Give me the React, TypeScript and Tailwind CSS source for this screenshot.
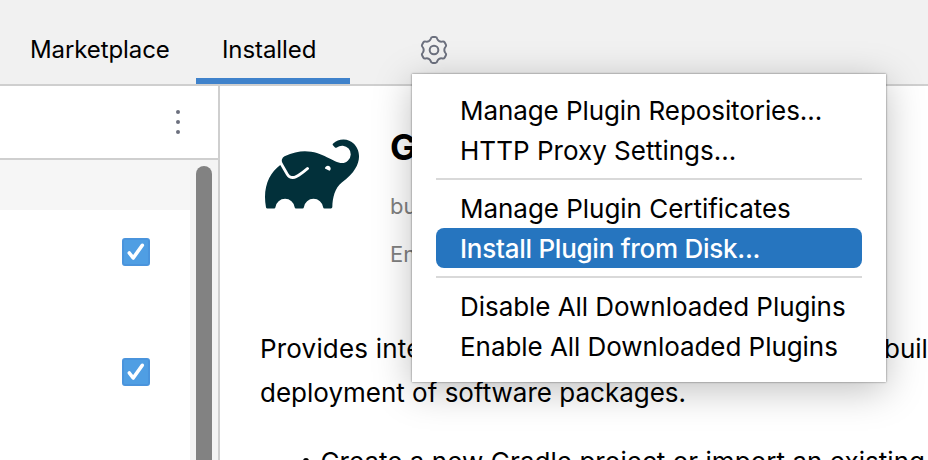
import React from "react";
import { SiGradle } from "react-icons/si";

// One lobe of the gear, pointing up; the outline is this curve turned six times.
const LOBE: [number, number][] = [
  [-12, -28.8], [-11, -30], [-10, -33],
  [-9, -37.5], [-7.5, -39], [-4, -39],
  [-2, -39], [2, -39], [4, -39],
  [7.5, -39], [9, -37.5], [10, -33],
  [11, -30], [12, -28.8], [15.5, -26.8],
];

function gearPath() {
  let d = "M-15.5 -26.8";
  for (let k = 0; k < 6; k++) {
    const c = Math.cos((k * Math.PI) / 3);
    const s = Math.sin((k * Math.PI) / 3);
    LOBE.forEach(([x, y], i) => {
      d += `${i % 3 === 0 ? " C" : " "}${(x * c - y * s).toFixed(2)} ${(x * s + y * c).toFixed(2)}`;
    });
  }
  return d + "Z";
}

function Gear() {
  return (
    <svg className="h-[30px] w-[30px]" viewBox="-45 -45 90 90" fill="none" stroke="#6c707e" strokeWidth="6">
      <path d={gearPath()} />
      <circle r="13" />
    </svg>
  );
}

function Checkbox() {
  return (
    <div className="flex h-7 w-7 items-center justify-center rounded-[3px] border-2 border-[#4a94dc] bg-[#4f9ee3]">
      <svg className="h-6 w-6 shrink-0" viewBox="0 0 24 24" fill="none" stroke="#fff" strokeWidth="3.6" strokeLinecap="round" strokeLinejoin="round">
        <path d="M5.3 13 L9.2 18 L18.3 5.3" />
      </svg>
    </div>
  );
}

function Item({ label, spacing, selected }: { label: string; spacing: string; selected?: boolean }) {
  return (
    <div
      className={`flex h-10 items-center whitespace-nowrap rounded-lg pl-6 pt-0.5 text-[26px] leading-[38px] ${spacing} ${
        selected ? "bg-[#2675bf] font-medium text-white" : "text-black"
      }`}
    >
      {label}
    </div>
  );
}

function Separator() {
  return (
    <div className="flex h-[18px] flex-col justify-center">
      <div className="h-0.5 bg-[#d9d9d9]" />
    </div>
  );
}

export default function App() {
  return (
    <div className="relative flex h-[460px] w-[928px] flex-col overflow-hidden bg-white font-['Inter','Liberation_Sans',sans-serif] text-black">
      <header className="flex h-[86px] shrink-0 border-b-2 border-[#cfcfcf] bg-[#f1f1f1] text-[24px] leading-[30px]">
        <div className="w-[196px] pl-[30px] pt-[35px] tracking-[-0.1px]">Marketplace</div>
        <div className="w-[154px] border-b-[6px] border-[#3f82cb] pl-[26px] pt-[35px] tracking-[-0.08px]">Installed</div>
        <div className="pl-[69px] pt-[35px]">
          <Gear />
        </div>
      </header>
      <div className="flex min-h-0 flex-1">
        <aside className="flex w-[220px] shrink-0 flex-col border-r-2 border-[#cfcfcf]">
          <div className="flex h-[74px] shrink-0 flex-col items-end border-b-2 border-[#cfcfcf] pr-[38px] pt-6">
            <div className="flex flex-col gap-1.5">
              <div className="h-1 w-1 rounded-full bg-[#6c707e]" />
              <div className="h-1 w-1 rounded-full bg-[#6c707e]" />
              <div className="h-1 w-1 rounded-full bg-[#6c707e]" />
            </div>
          </div>
          <div className="flex min-h-0 flex-1">
            <div className="w-[190px]">
              <div className="h-[50px] bg-[#f6f6f6]" />
              <div className="flex flex-col gap-[92px] pl-[122px] pt-7">
                <Checkbox />
                <Checkbox />
              </div>
            </div>
            <div className="w-7 bg-[#f4f4f4] pl-1.5 pt-1.5">
              <div className="h-full w-4 rounded-t-full bg-[#828282]" />
            </div>
          </div>
        </aside>
        <main className="min-w-0 flex-1 overflow-hidden">
          <div className="flex h-[241px] pl-[45px]">
            <SiGradle className="mt-[40.5px] h-[94px] w-[94px] shrink-0 text-[#02303a]" />
            <div className="pl-[31px]">
              <div className="pt-[39px] text-[36px] font-bold leading-[44px]">Gradle</div>
              <div className="pt-[23px] text-[22px] leading-7 text-[#808080]">bundled</div>
              <div className="pt-5 text-[22px] leading-7 text-[#808080]">Enabled</div>
            </div>
          </div>
          <div className="whitespace-nowrap pl-10 text-[26px] leading-[44px]">
            <div className="flex">
              <span className="w-[624px] shrink-0 tracking-[0.18px]">Provides integration with Gradle</span>
              <span>build</span>
            </div>
            <div>deployment of software packages.</div>
            <div className="flex pt-[25px] tracking-[0.04px]">
              <div className="ml-[43px] mr-[11.5px] mt-[18px] h-1.5 w-1.5 shrink-0 rounded-full bg-black" />
              <span>Create a new Gradle project or import an existing</span>
            </div>
          </div>
        </main>
      </div>
      <div className="absolute left-[412px] top-[74px] h-[308px] w-[474px] bg-white px-6 py-4 shadow-[0_0_2px_rgba(0,0,0,0.55),0_8px_36px_rgba(0,0,0,0.25)]">
        <Item label="Manage Plugin Repositories..." spacing="tracking-[-0.08px]" />
        <Item label="HTTP Proxy Settings..." spacing="tracking-[0.02px]" />
        <Separator />
        <Item label="Manage Plugin Certificates" spacing="tracking-[-0.03px]" />
        <Item label="Install Plugin from Disk..." spacing="tracking-[-0.26px]" selected />
        <Separator />
        <Item label="Disable All Downloaded Plugins" spacing="tracking-[-0.05px]" />
        <Item label="Enable All Downloaded Plugins" spacing="tracking-[-0.05px]" />
      </div>
    </div>
  );
}
